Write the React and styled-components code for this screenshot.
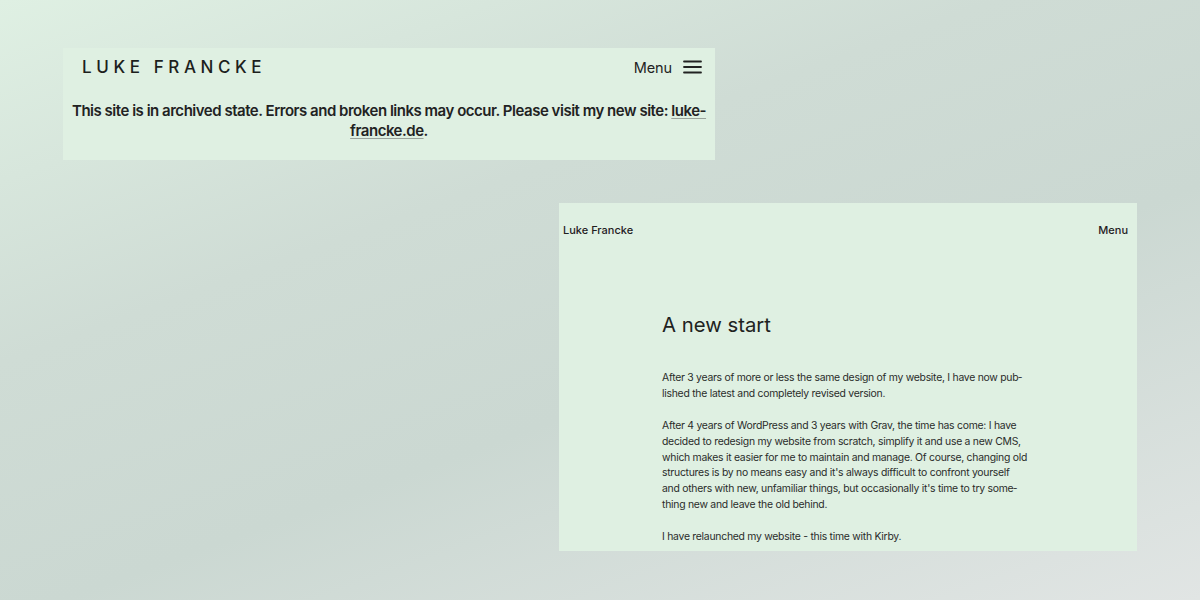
import React from "react";
import styled, { createGlobalStyle } from "styled-components";

const Global = createGlobalStyle`
  html, body { margin: 0; padding: 0; }
  body {
    width: 1200px;
    height: 600px;
    overflow: hidden;
    background: linear-gradient(160deg, #dff0e3 0%, #cfdcd5 35%, #cbd8d2 60%, #e1e5e4 100%);
    font-family: Inter, "Noto Sans", sans-serif;
    color: #222;
  }
`;

const Stage = styled.div`
  width: 1200px;
  height: 600px;
  box-sizing: border-box;
  padding: 48px 63px 0;
  display: flex;
  flex-direction: column;
  gap: 43px;
`;

const Panel = styled.section`
  background: #dff0e2;
  box-sizing: border-box;
  overflow: hidden;
  width: ${(p) => p.$w}px;
  height: ${(p) => p.$h}px;
  align-self: ${(p) => (p.$right ? "flex-end" : "flex-start")};
`;

const BigHeader = styled.header`
  display: flex;
  justify-content: space-between;
  align-items: center;
  padding: 5px 13px 0 19px;
  height: 28px;
`;

const Logo = styled.div`
  font-size: 17px;
  font-weight: 500;
  letter-spacing: 4.6px;
  color: #1d1f1d;
`;

const MenuBtn = styled.div`
  display: flex;
  align-items: center;
  gap: 11px;
  font-size: 14.5px;
  letter-spacing: -0.1px;
  color: #222;
`;

const Notice = styled.p`
  margin: 20px 6px 0;
  text-align: center;
  font-size: 15px;
  font-weight: 600;
  letter-spacing: -0.48px;
  line-height: 20px;
  color: #222;
  a {
    color: #222;
    text-decoration: underline;
    text-decoration-color: #9aa39c;
    text-underline-offset: 2px;
  }
`;

const SmallHeader = styled.header`
  display: flex;
  justify-content: space-between;
  align-items: center;
  padding: 20px 9px 0 4px;
  font-size: 11px;
  font-weight: 500;
  color: #1f211f;
`;

const Article = styled.article`
  padding: 74px 0 0 103px;
  width: 367px;
`;

const Title = styled.h1`
  margin: 0 0 31px;
  font-size: 20.3px;
  font-weight: 400;
  line-height: 28px;
  color: #202220;
`;

const Para = styled.p`
  margin: 0 0 16.4px;
  font-size: 10.4px;
  letter-spacing: -0.26px;
  line-height: 15.8px;
  color: #2a2c2a;
`;

function Burger() {
  return (
    <svg width="19" height="14" viewBox="0 0 19 14">
      <g stroke="#222" strokeWidth="1.8" strokeLinecap="round">
        <line x1="1" y1="1.5" x2="18" y2="1.5" />
        <line x1="1" y1="7" x2="18" y2="7" />
        <line x1="1" y1="12.5" x2="18" y2="12.5" />
      </g>
    </svg>
  );
}

export default function App() {
  return (
    <>
      <Global />
      <Stage>
        <Panel $w={652} $h={112}>
          <BigHeader>
            <Logo>LUKE FRANCKE</Logo>
            <MenuBtn>
              Menu <Burger />
            </MenuBtn>
          </BigHeader>
          <Notice>
            This site is in archived state. Errors and broken links may occur. Please visit my new site:{" "}
            <a href="#">luke-francke.de</a>.
          </Notice>
        </Panel>
        <Panel $w={578} $h={348} $right>
          <SmallHeader>
            <span>Luke Francke</span>
            <span>Menu</span>
          </SmallHeader>
          <Article>
            <Title>A new start</Title>
            <Para>
              After 3 years of more or less the same design of my website, I have now pub&shy;lished the latest and completely revised version.
            </Para>
            <Para>
              After 4 years of WordPress and 3 years with Grav, the time has come: I have decided to redesign my website from scratch, simplify it and use a new CMS, which makes it easier for me to maintain and manage. Of course, changing old structures is by no means easy and it's always difficult to confront yourself and others with new, unfamiliar things, but occasionally it's time to try some&shy;thing new and leave the old behind.
            </Para>
            <Para>I have relaunched my website - this time with Kirby.</Para>
          </Article>
        </Panel>
      </Stage>
    </>
  );
}
